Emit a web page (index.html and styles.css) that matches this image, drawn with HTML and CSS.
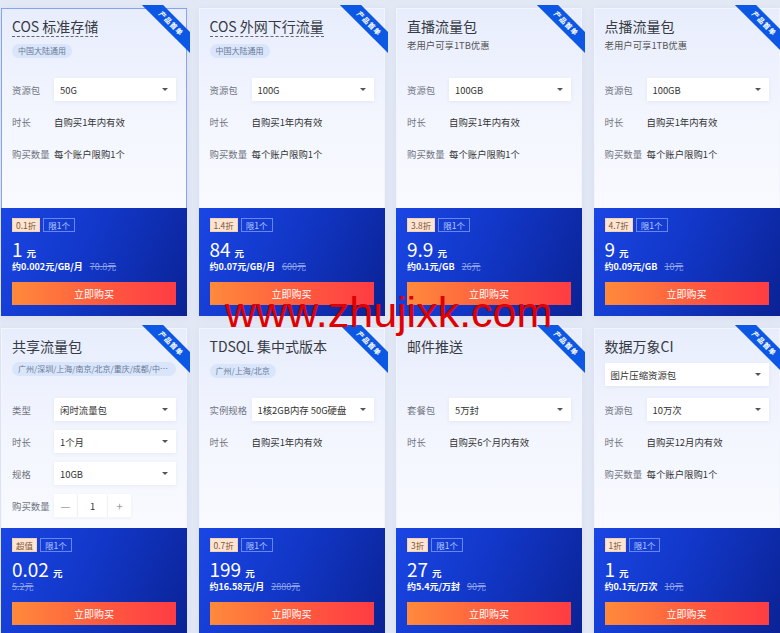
FILE: index.html
```html
<!DOCTYPE html>
<html lang="zh-CN">
<head>
<meta charset="utf-8">
<title>产品首单</title>
<link rel="stylesheet" href="styles.css">
</head>
<body>
<div class="grid">

  <div class="card active">
    <div class="ribbon"><span>产品首单</span></div>
    <div class="top">
      <div class="head">
        <div class="title"><span class="dashed">COS 标准存储</span></div>
        <div class="tag">中国大陆通用</div>
      </div>
      <div class="form">
        <div class="row"><div class="label">资源包</div><div class="select"><span>50G</span><i class="caret"></i></div></div>
        <div class="row"><div class="label">时长</div><div class="val">自购买1年内有效</div></div>
        <div class="row"><div class="label">购买数量</div><div class="val">每个账户限购1个</div></div>
      </div>
    </div>
    <div class="bottom">
      <div class="badges"><span class="disc">0.1折</span><span class="limit">限1个</span></div>
      <div class="price"><span class="num">1</span><span class="unit">元</span></div>
      <div class="sub"><span>约0.002元/GB/月</span><s>70.8元</s></div>
      <div class="buy">立即购买</div>
    </div>
  </div>

  <div class="card">
    <div class="ribbon"><span>产品首单</span></div>
    <div class="top">
      <div class="head">
        <div class="title"><span class="dashed">COS 外网下行流量</span></div>
        <div class="tag">中国大陆通用</div>
      </div>
      <div class="form">
        <div class="row"><div class="label">资源包</div><div class="select"><span>100G</span><i class="caret"></i></div></div>
        <div class="row"><div class="label">时长</div><div class="val">自购买1年内有效</div></div>
        <div class="row"><div class="label">购买数量</div><div class="val">每个账户限购1个</div></div>
      </div>
    </div>
    <div class="bottom">
      <div class="badges"><span class="disc">1.4折</span><span class="limit">限1个</span></div>
      <div class="price"><span class="num">84</span><span class="unit">元</span></div>
      <div class="sub"><span>约0.07元/GB/月</span><s>600元</s></div>
      <div class="buy">立即购买</div>
    </div>
  </div>

  <div class="card">
    <div class="ribbon"><span>产品首单</span></div>
    <div class="top">
      <div class="head">
        <div class="title">直播流量包</div>
        <div class="desc">老用户可享1TB优惠</div>
      </div>
      <div class="form">
        <div class="row"><div class="label">资源包</div><div class="select"><span>100GB</span><i class="caret"></i></div></div>
        <div class="row"><div class="label">时长</div><div class="val">自购买1年内有效</div></div>
        <div class="row"><div class="label">购买数量</div><div class="val">每个账户限购1个</div></div>
      </div>
    </div>
    <div class="bottom">
      <div class="badges"><span class="disc">3.8折</span><span class="limit">限1个</span></div>
      <div class="price"><span class="num">9.9</span><span class="unit">元</span></div>
      <div class="sub"><span>约0.1元/GB</span><s>26元</s></div>
      <div class="buy">立即购买</div>
    </div>
  </div>

  <div class="card">
    <div class="ribbon"><span>产品首单</span></div>
    <div class="top">
      <div class="head">
        <div class="title">点播流量包</div>
        <div class="desc">老用户可享1TB优惠</div>
      </div>
      <div class="form">
        <div class="row"><div class="label">资源包</div><div class="select"><span>100GB</span><i class="caret"></i></div></div>
        <div class="row"><div class="label">时长</div><div class="val">自购买1年内有效</div></div>
        <div class="row"><div class="label">购买数量</div><div class="val">每个账户限购1个</div></div>
      </div>
    </div>
    <div class="bottom">
      <div class="badges"><span class="disc">4.7折</span><span class="limit">限1个</span></div>
      <div class="price"><span class="num">9</span><span class="unit">元</span></div>
      <div class="sub"><span>约0.09元/GB</span><s>10元</s></div>
      <div class="buy">立即购买</div>
    </div>
  </div>

  <div class="card">
    <div class="ribbon"><span>产品首单</span></div>
    <div class="top">
      <div class="head">
        <div class="title">共享流量包</div>
        <div class="tag wide">广州/深圳/上海/南京/北京/重庆/成都/中国香港/新加坡</div>
      </div>
      <div class="form">
        <div class="row"><div class="label">类型</div><div class="select"><span>闲时流量包</span><i class="caret"></i></div></div>
        <div class="row"><div class="label">时长</div><div class="select"><span>1个月</span><i class="caret"></i></div></div>
        <div class="row"><div class="label">规格</div><div class="select"><span>10GB</span><i class="caret"></i></div></div>
        <div class="row"><div class="label">购买数量</div>
          <div class="stepper"><span class="step">—</span><span class="count">1</span><span class="step">+</span></div>
        </div>
      </div>
    </div>
    <div class="bottom">
      <div class="badges"><span class="disc">超值</span><span class="limit">限1个</span></div>
      <div class="price"><span class="num">0.02</span><span class="unit">元</span></div>
      <div class="sub"><s class="only">5.2元</s></div>
      <div class="buy">立即购买</div>
    </div>
  </div>

  <div class="card">
    <div class="ribbon"><span>产品首单</span></div>
    <div class="top">
      <div class="head">
        <div class="title">TDSQL 集中式版本</div>
        <div class="tag">广州/上海/北京</div>
      </div>
      <div class="form">
        <div class="row"><div class="label">实例规格</div><div class="select"><span>1核2GB内存 50G硬盘</span><i class="caret"></i></div></div>
        <div class="row"><div class="label">时长</div><div class="val">自购买1年内有效</div></div>
      </div>
    </div>
    <div class="bottom">
      <div class="badges"><span class="disc">0.7折</span><span class="limit">限1个</span></div>
      <div class="price"><span class="num">199</span><span class="unit">元</span></div>
      <div class="sub"><span>约16.58元/月</span><s>2880元</s></div>
      <div class="buy">立即购买</div>
    </div>
  </div>

  <div class="card">
    <div class="ribbon"><span>产品首单</span></div>
    <div class="top">
      <div class="head">
        <div class="title">邮件推送</div>
      </div>
      <div class="form">
        <div class="row"><div class="label">套餐包</div><div class="select"><span>5万封</span><i class="caret"></i></div></div>
        <div class="row"><div class="label">时长</div><div class="val">自购买6个月内有效</div></div>
      </div>
    </div>
    <div class="bottom">
      <div class="badges"><span class="disc">3折</span><span class="limit">限1个</span></div>
      <div class="price"><span class="num">27</span><span class="unit">元</span></div>
      <div class="sub"><span>约5.4元/万封</span><s>90元</s></div>
      <div class="buy">立即购买</div>
    </div>
  </div>

  <div class="card">
    <div class="ribbon"><span>产品首单</span></div>
    <div class="top">
      <div class="head">
        <div class="title">数据万象CI</div>
        <div class="select full"><span>图片压缩资源包</span><i class="caret"></i></div>
      </div>
      <div class="form">
        <div class="row"><div class="label">资源包</div><div class="select"><span>10万次</span><i class="caret"></i></div></div>
        <div class="row"><div class="label">时长</div><div class="val">自购买12月内有效</div></div>
        <div class="row"><div class="label">购买数量</div><div class="val">每个账户限购1个</div></div>
      </div>
    </div>
    <div class="bottom">
      <div class="badges"><span class="disc">1折</span><span class="limit">限1个</span></div>
      <div class="price"><span class="num">1</span><span class="unit">元</span></div>
      <div class="sub"><span>约0.1元/万次</span><s>10元</s></div>
      <div class="buy">立即购买</div>
    </div>
  </div>

</div>
<div class="watermark">www.zhujixk.com</div>
</body>
</html>
```

FILE: styles.css
```css
html, body {
  margin: 0;
  padding: 0;
}
body {
  position: relative;
  width: 780px;
  height: 633px;
  overflow: hidden;
  background: #e3e8f5;
  font-family: "Noto Sans CJK SC", "Liberation Sans", sans-serif;
  color: #333;
}
.grid {
  display: grid;
  grid-template-columns: repeat(4, 186px);
  column-gap: 11.5px;
  row-gap: 12px;
  padding: 8px 0 0 1px;
}
.card {
  position: relative;
  height: 308px;
  box-sizing: border-box;
  border: 1px solid #f3f5fd;
  display: flex;
  flex-direction: column;
  box-shadow: 0 2px 8px rgba(40, 70, 160, 0.06);
}
.card.active {
  border-color: #86a5ec;
}
.top {
  flex: 0 0 199px;
  box-sizing: border-box;
  padding: 8px 10px 0;
  background: linear-gradient(180deg, #e8edfd 0%, #f3f6fe 55%, #f9faff 100%);
}
.head {
  height: 61px;
}
.title {
  font-size: 14px;
  line-height: 18px;
  color: #363a42;
  white-space: nowrap;
}
.dashed {
  border-bottom: 1px dashed #666;
}
.tag {
  display: inline-block;
  margin-top: 7px;
  height: 14px;
  line-height: 14px;
  padding: 0 6px;
  border-radius: 7px;
  background: #d8e5fb;
  color: #6a7894;
  font-size: 8px;
  white-space: nowrap;
}
.tag.wide {
  display: block;
  overflow: hidden;
  text-overflow: ellipsis;
}
.desc {
  margin-top: 3px;
  font-size: 9.4px;
  line-height: 14px;
  color: #555;
}
.form {
  display: flex;
  flex-direction: column;
  gap: 9px;
}
.row {
  display: flex;
  align-items: center;
  height: 23px;
  font-size: 9.4px;
}
.label {
  flex: 0 0 42px;
  color: #6f7380;
  white-space: nowrap;
}
.val {
  color: #333;
  white-space: nowrap;
}
.select {
  flex: 1;
  height: 23px;
  display: flex;
  align-items: center;
  justify-content: space-between;
  padding: 0 8px 0 6px;
  background: #fff;
  box-shadow: 0 1px 4px rgba(60, 80, 140, 0.08);
  font-size: 9.4px;
  color: #333;
  white-space: nowrap;
  box-sizing: border-box;
}
.select.full {
  margin-top: 8px;
}
.caret {
  width: 0;
  height: 0;
  border-left: 3px solid transparent;
  border-right: 3px solid transparent;
  border-top: 3.5px solid #555;
}
.stepper {
  display: flex;
  height: 23px;
  gap: 1px;
}
.step, .count {
  display: flex;
  align-items: center;
  justify-content: center;
  background: #fff;
  box-shadow: 0 1px 3px rgba(60, 80, 140, 0.06);
}
.step {
  width: 23px;
  color: #999;
  font-size: 11px;
}
.count {
  width: 29px;
  color: #333;
  font-size: 9.4px;
}
.bottom {
  flex: 0 0 108px;
  margin: 0 -1px -1px;
  box-sizing: border-box;
  padding: 10px 11px 10px;
  background: linear-gradient(115deg, #1a46e4 0%, #1237c8 45%, #0a2294 100%);
  color: #fff;
}
.badges {
  display: flex;
  gap: 3px;
  height: 14px;
}
.badges span {
  box-sizing: border-box;
  height: 14px;
  line-height: 12px;
  padding: 0 3px;
  font-size: 8.5px;
  white-space: nowrap;
}
.disc {
  background: #fde5d3;
  border: 1px solid #f7cfb3;
  color: #7d5535;
}
.limit {
  border: 1px solid rgba(130, 160, 250, 0.75);
  color: #b7c8ff;
  padding: 0 4px !important;
}
.price {
  margin-top: 7px;
  height: 20px;
  line-height: 20px;
  white-space: nowrap;
}
.num {
  font-size: 19px;
  color: #fff;
}
.unit {
  margin-left: 4px;
  font-size: 9.5px;
  font-weight: 700;
}
.sub {
  margin-top: 2px;
  height: 12px;
  line-height: 12px;
  font-size: 9px;
  font-weight: 700;
  white-space: nowrap;
}
.sub s {
  margin-left: 7px;
  font-weight: 400;
  color: #8ea3e8;
}
.sub s.only {
  margin-left: 0;
}
.buy {
  margin-top: 9px;
  height: 23px;
  line-height: 23px;
  text-align: center;
  font-size: 10px;
  color: #fff;
  background: linear-gradient(90deg, #ff8a3b 0%, #ff5a3f 55%, #ff3c43 100%);
}
.ribbon {
  position: absolute;
  top: -4px;
  right: -4px;
  width: 49px;
  height: 49px;
  overflow: hidden;
  z-index: 2;
}
.ribbon span {
  position: absolute;
  left: -6px;
  top: 11px;
  width: 72px;
  height: 15px;
  line-height: 15px;
  transform: rotate(45deg);
  background: #0c58e4;
  color: #fff;
  font-size: 7px;
  font-weight: 700;
  letter-spacing: 0.8px;
  text-align: center;
}
.watermark {
  position: absolute;
  left: 225px;
  top: 291px;
  font-family: "Liberation Sans", sans-serif;
  font-size: 43px;
  line-height: 1;
  color: #e00000;
  white-space: nowrap;
  z-index: 5;
  pointer-events: none;
}
```
